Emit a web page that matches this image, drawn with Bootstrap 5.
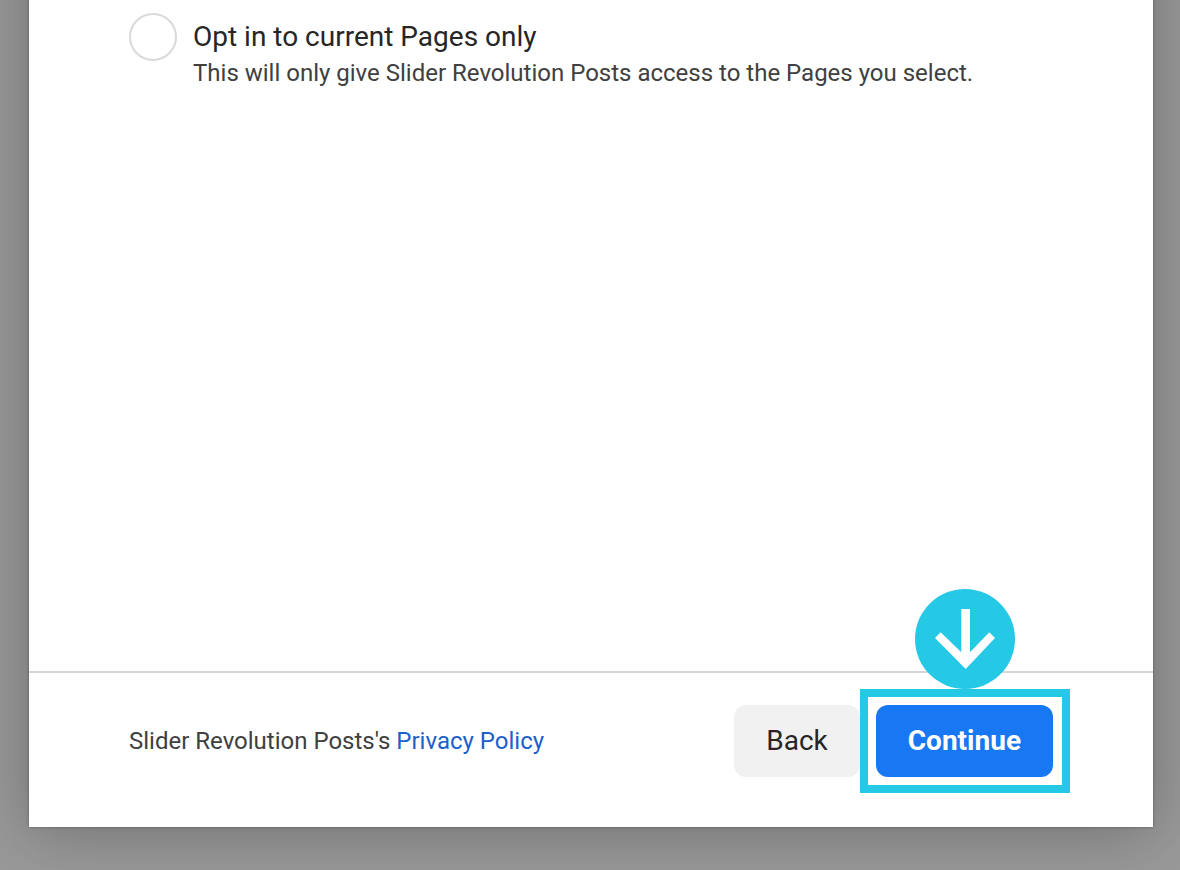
<!DOCTYPE html>
<html lang="en">
<head>
<meta charset="utf-8">
<meta name="viewport" content="width=device-width, initial-scale=1">
<title>Page access</title>
<link href="https://cdn.jsdelivr.net/npm/bootstrap@5.3.0/dist/css/bootstrap.min.css" rel="stylesheet">
<style>
body{background:#999;font-family:Roboto,sans-serif;color:#1c1e21}
.backdrop-area{min-height:100vh;padding:0 27px 43px 29px;overflow:hidden}
/* The panel runs on past the top edge, so its shadow has no upper corners */
.dialog-panel{background:#fff;margin-top:-100px;padding-top:100px;box-shadow:0 4px 60px rgba(0,0,0,.27),0 0 3px rgba(0,0,0,.3)}
.dialog-main{padding:13px 100px}
.choice{gap:16px}
.choice .form-check-input{width:48px;height:48px;border:2px solid #d9d9d9}
.choice-title{font-size:28px;line-height:36px;margin-top:6px;color:#262626}
.choice-note{font-size:24px;line-height:36px;color:#404040}
.dialog-footer{border-top:2px solid #d6d6d6;padding:32px 100px 50px}
.policy{font-size:24px;line-height:36px;color:#404040}
.policy a{color:#1b61cb}
.action{height:72px;border:0;border-radius:12px;font-size:28px;line-height:36px;padding:0 32px}
.action-back{background:#f1f1f1;color:#262626}
.action-next{background:#1877f2;color:#fff;font-weight:700}
.highlight{inset:-16px -17px -16px -16px;border:8px solid #25c8e5;pointer-events:none}
.pointer{width:100px;height:100px;bottom:100%;left:50%;margin-left:-50px}
</style>
</head>
<body>
<div class="backdrop-area d-flex flex-column">
<form class="dialog-panel d-flex flex-column flex-grow-1">
<main class="dialog-main flex-grow-1">
<div class="choice d-flex align-items-start">
<input class="form-check-input flex-shrink-0 m-0" type="radio" name="access" id="current" aria-describedby="note">
<div><label class="choice-title d-block" for="current">Opt in to current Pages only</label>
<div class="choice-note" id="note">This will only give Slider Revolution Posts access to the Pages you select.</div></div>
</div>
</main>
<footer class="dialog-footer d-flex justify-content-between align-items-center">
<div class="policy">Slider Revolution Posts's <a class="text-decoration-none" href="#">Privacy Policy</a></div>
<div class="d-flex gap-3">
<button class="btn action action-back" type="button">Back</button>
<div class="position-relative">
<button class="btn action action-next" type="button">Continue</button>
<div class="highlight position-absolute">
<svg class="pointer position-absolute mb-2" viewBox="0 0 100 100" aria-hidden="true"><circle cx="50" cy="50" r="50" fill="#25c8e5"/><path d="M46.3 20H55V63.3L74.3 43.3L80 49L50.7 80L20 49L25.7 43.3L46.3 63.3Z" fill="#fff"/></svg>
</div>
</div>
</div>
</footer>
</form>
</div>
<script src="https://cdn.jsdelivr.net/npm/bootstrap@5.3.0/dist/js/bootstrap.bundle.min.js"></script>
</body>
</html>
